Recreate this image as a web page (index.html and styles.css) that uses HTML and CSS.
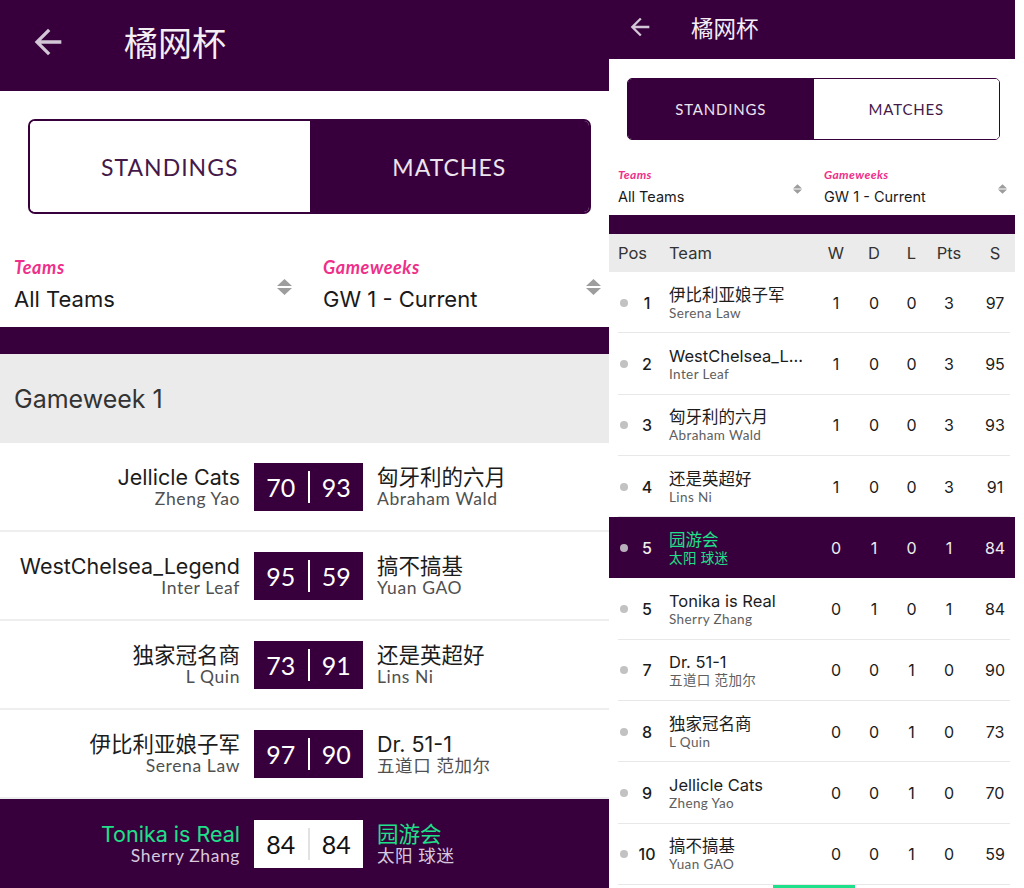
FILE: index.html
```html
<!DOCTYPE html>
<html lang="zh">
<head>
<meta charset="utf-8">
<title>橘网杯</title>
<link rel="stylesheet" href="styles.css">
</head>
<body>
<div class="screen">
  <!-- LEFT: matches -->
  <section class="phone phone-l">
    <header class="appbar appbar-l">
      <svg class="back back-l" viewBox="0 0 24 24"><path d="M20 11H7.83l5.59-5.59L12 4l-8 8 8 8 1.41-1.41L7.83 13H20v-2z"/></svg>
      <h1 class="title title-l">橘网杯</h1>
    </header>
    <div class="tabs-wrap tabs-wrap-l">
      <div class="tabs tabs-l">
        <div class="tab">STANDINGS</div>
        <div class="tab active">MATCHES</div>
      </div>
    </div>
    <div class="filters filters-l">
      <div class="filter">
        <div class="filter-text"><div class="flabel">Teams</div><div class="fvalue">All Teams</div></div>
        <svg class="updown" viewBox="0 0 15 16"><path d="M0 7L7.5 0L15 7Z M0 9L15 9L7.5 16Z"/></svg>
      </div>
      <div class="filter">
        <div class="filter-text"><div class="flabel">Gameweeks</div><div class="fvalue">GW 1 - Current</div></div>
        <svg class="updown" viewBox="0 0 15 16"><path d="M0 7L7.5 0L15 7Z M0 9L15 9L7.5 16Z"/></svg>
      </div>
    </div>
    <div class="band band-l"></div>
    <div class="gw-title">Gameweek 1</div>
    <div class="match">
      <div class="side home"><div class="team">Jellicle Cats</div><div class="mgr">Zheng Yao</div></div>
      <div class="score"><span>70</span><i class="sep"></i><span>93</span></div>
      <div class="side away"><div class="team">匈牙利的六月</div><div class="mgr">Abraham Wald</div></div>
    </div>
    <div class="match">
      <div class="side home"><div class="team">WestChelsea_Legend</div><div class="mgr">Inter Leaf</div></div>
      <div class="score"><span>95</span><i class="sep"></i><span>59</span></div>
      <div class="side away"><div class="team">搞不搞基</div><div class="mgr">Yuan GAO</div></div>
    </div>
    <div class="match">
      <div class="side home"><div class="team">独家冠名商</div><div class="mgr">L Quin</div></div>
      <div class="score"><span>73</span><i class="sep"></i><span>91</span></div>
      <div class="side away"><div class="team">还是英超好</div><div class="mgr">Lins Ni</div></div>
    </div>
    <div class="match">
      <div class="side home"><div class="team">伊比利亚娘子军</div><div class="mgr">Serena Law</div></div>
      <div class="score"><span>97</span><i class="sep"></i><span>90</span></div>
      <div class="side away"><div class="team">Dr. 51-1</div><div class="mgr">五道口 范加尔</div></div>
    </div>
    <div class="match me">
      <div class="side home"><div class="team">Tonika is Real</div><div class="mgr">Sherry Zhang</div></div>
      <div class="score"><span>84</span><i class="sep"></i><span>84</span></div>
      <div class="side away"><div class="team">园游会</div><div class="mgr">太阳 球迷</div></div>
    </div>
  </section>

  <!-- RIGHT: standings -->
  <section class="phone phone-r">
    <header class="appbar appbar-r">
      <svg class="back back-r" viewBox="0 0 24 24"><path d="M20 11H7.83l5.59-5.59L12 4l-8 8 8 8 1.41-1.41L7.83 13H20v-2z"/></svg>
      <h1 class="title title-r">橘网杯</h1>
    </header>
    <div class="tabs-wrap tabs-wrap-r">
      <div class="tabs tabs-r">
        <div class="tab active">STANDINGS</div>
        <div class="tab">MATCHES</div>
      </div>
    </div>
    <div class="filters filters-r">
      <div class="filter">
        <div class="filter-text"><div class="flabel">Teams</div><div class="fvalue">All Teams</div></div>
        <svg class="updown" viewBox="0 0 15 16"><path d="M0 7L7.5 0L15 7Z M0 9L15 9L7.5 16Z"/></svg>
      </div>
      <div class="filter">
        <div class="filter-text"><div class="flabel">Gameweeks</div><div class="fvalue">GW 1 - Current</div></div>
        <svg class="updown" viewBox="0 0 15 16"><path d="M0 7L7.5 0L15 7Z M0 9L15 9L7.5 16Z"/></svg>
      </div>
    </div>
    <div class="band band-r"></div>
    <div class="table">
      <div class="trow thead">
        <div class="c-pos">Pos</div><div class="c-team">Team</div>
        <div class="c-n">W</div><div class="c-n">D</div><div class="c-n">L</div><div class="c-n">Pts</div><div class="c-n c-s">S</div>
      </div>
      <div class="trow">
        <div class="c-pos"><i class="dot"></i><span class="pos">1</span></div>
        <div class="c-team"><div class="tname">伊比利亚娘子军</div><div class="tmgr">Serena Law</div></div>
        <div class="c-n">1</div><div class="c-n">0</div><div class="c-n">0</div><div class="c-n">3</div><div class="c-n c-s">97</div>
      </div>
      <div class="trow">
        <div class="c-pos"><i class="dot"></i><span class="pos">2</span></div>
        <div class="c-team"><div class="tname">WestChelsea_Legend</div><div class="tmgr">Inter Leaf</div></div>
        <div class="c-n">1</div><div class="c-n">0</div><div class="c-n">0</div><div class="c-n">3</div><div class="c-n c-s">95</div>
      </div>
      <div class="trow">
        <div class="c-pos"><i class="dot"></i><span class="pos">3</span></div>
        <div class="c-team"><div class="tname">匈牙利的六月</div><div class="tmgr">Abraham Wald</div></div>
        <div class="c-n">1</div><div class="c-n">0</div><div class="c-n">0</div><div class="c-n">3</div><div class="c-n c-s">93</div>
      </div>
      <div class="trow">
        <div class="c-pos"><i class="dot"></i><span class="pos">4</span></div>
        <div class="c-team"><div class="tname">还是英超好</div><div class="tmgr">Lins Ni</div></div>
        <div class="c-n">1</div><div class="c-n">0</div><div class="c-n">0</div><div class="c-n">3</div><div class="c-n c-s">91</div>
      </div>
      <div class="trow me">
        <div class="c-pos"><i class="dot"></i><span class="pos">5</span></div>
        <div class="c-team"><div class="tname">园游会</div><div class="tmgr">太阳 球迷</div></div>
        <div class="c-n">0</div><div class="c-n">1</div><div class="c-n">0</div><div class="c-n">1</div><div class="c-n c-s">84</div>
      </div>
      <div class="trow">
        <div class="c-pos"><i class="dot"></i><span class="pos">5</span></div>
        <div class="c-team"><div class="tname">Tonika is Real</div><div class="tmgr">Sherry Zhang</div></div>
        <div class="c-n">0</div><div class="c-n">1</div><div class="c-n">0</div><div class="c-n">1</div><div class="c-n c-s">84</div>
      </div>
      <div class="trow">
        <div class="c-pos"><i class="dot"></i><span class="pos">7</span></div>
        <div class="c-team"><div class="tname">Dr. 51-1</div><div class="tmgr">五道口 范加尔</div></div>
        <div class="c-n">0</div><div class="c-n">0</div><div class="c-n">1</div><div class="c-n">0</div><div class="c-n c-s">90</div>
      </div>
      <div class="trow">
        <div class="c-pos"><i class="dot"></i><span class="pos">8</span></div>
        <div class="c-team"><div class="tname">独家冠名商</div><div class="tmgr">L Quin</div></div>
        <div class="c-n">0</div><div class="c-n">0</div><div class="c-n">1</div><div class="c-n">0</div><div class="c-n c-s">73</div>
      </div>
      <div class="trow">
        <div class="c-pos"><i class="dot"></i><span class="pos">9</span></div>
        <div class="c-team"><div class="tname">Jellicle Cats</div><div class="tmgr">Zheng Yao</div></div>
        <div class="c-n">0</div><div class="c-n">0</div><div class="c-n">1</div><div class="c-n">0</div><div class="c-n c-s">70</div>
      </div>
      <div class="trow">
        <div class="c-pos"><i class="dot"></i><span class="pos">10</span></div>
        <div class="c-team"><div class="tname">搞不搞基</div><div class="tmgr">Yuan GAO</div></div>
        <div class="c-n">0</div><div class="c-n">0</div><div class="c-n">1</div><div class="c-n">0</div><div class="c-n c-s">59</div>
      </div>
    </div>
    <div class="scroll-tab"></div>
  </section>
</div>
</body>
</html>
```

FILE: styles.css
```css
:root {
  --purple: #37003c;
  --pink: #ef2f8a;
  --green: #1fe08a;
  --sans: "Inter", "Noto Sans CJK SC", sans-serif;
  --geo: "Lato", "Noto Sans CJK SC", sans-serif;
  --cjk: "Noto Sans CJK SC", sans-serif;
}

* { box-sizing: border-box; }

body {
  margin: 0;
  background: #fff;
  font-family: var(--sans);
  color: #1c1c1c;
}

.screen {
  display: flex;
  width: 1024px;
  height: 888px;
  overflow: hidden;
}

.phone {
  height: 888px;
  overflow: hidden;
  background: #fff;
  flex: none;
}
.phone-l { width: 609px; }
.phone-r { width: 406px; }

/* App bar */
.appbar {
  background: var(--purple);
  display: flex;
  align-items: center;
}
.appbar-l { height: 91px; padding: 0 0 8px 28px; }
.appbar-r { height: 59px; padding: 0 0 5px 17px; }

.back { fill: #d3c6d6; flex: none; }
.back-l { width: 40px; height: 40px; }
.back-r { width: 28px; height: 28px; }

.title {
  margin: 0;
  font-family: var(--cjk);
  font-weight: 400;
  color: #f4eef5;
  line-height: 1;
}
.title-l { font-size: 34px; margin-left: 56px; }
.title-r { font-size: 22.5px; margin-left: 37px; }

/* Segmented tabs */
.tabs-wrap-l { padding: 28px 18px 0 28px; }
.tabs-wrap-r { padding: 19px 15px 0 18px; }

.tabs {
  display: flex;
  border: 2px solid var(--purple);
  overflow: hidden;
}
.tabs-l { height: 95px; border-radius: 7px; }
.tabs-r { height: 62px; border-radius: 5px; border-width: 1.5px; }

.tab {
  flex: 1;
  display: flex;
  align-items: center;
  justify-content: center;
  font-family: var(--geo);
  color: #44194a;
  background: #fff;
}
.tab.active { background: var(--purple); color: #ece4ee; }
.tabs-l .tab { font-size: 23px; letter-spacing: 1px; }
.tabs-r .tab { font-size: 15px; letter-spacing: 0.8px; }

/* Filters */
.filters { display: grid; }
.filters-l { grid-template-columns: 309px 1fr; padding: 41px 0 8px; }
.filters-r { grid-template-columns: 204px 1fr; padding: 27px 0 4px; }

.filter {
  display: flex;
  align-items: center;
  justify-content: space-between;
}
.filters-l .filter:first-child { padding: 0 17px 0 14px; }
.filters-l .filter:last-child { padding: 0 8px 0 14px; }
.filters-r .filter:first-child { padding: 0 11px 0 9px; }
.filters-r .filter:last-child { padding: 0 8px 0 11px; }

.flabel {
  font-family: var(--geo);
  font-style: italic;
  font-weight: 700;
  color: var(--pink);
}
.fvalue { color: #1a1a1a; }

.filters-l .flabel { font-size: 18px; line-height: 24px; letter-spacing: 0.6px; }
.filters-l .fvalue { font-size: 22px; line-height: 40px; }
.filters-r .flabel { font-size: 12px; line-height: 16px; letter-spacing: 0.4px; }
.filters-r .fvalue { font-size: 14.5px; line-height: 28px; }

.updown { fill: #9d9d9d; flex: none; }
.filters-l .updown { width: 15px; height: 16px; }
.filters-r .updown { width: 9px; height: 12px; }

/* Purple band */
.band { background: var(--purple); }
.band-l { height: 27px; }
.band-r { height: 19px; }

/* Gameweek header */
.gw-title {
  height: 89px;
  background: #ebebeb;
  display: flex;
  align-items: center;
  padding: 0 0 0 14px;
  font-size: 25px;
  color: #333;
}

/* Match rows */
.match {
  display: grid;
  grid-template-columns: 254px 109px 1fr;
  align-items: center;
  height: 89px;
  border-bottom: 2px solid #eeeeee;
}
.match.me { background: var(--purple); border-bottom: none; }

.side { min-width: 0; white-space: nowrap; }
.home { text-align: right; padding-right: 14px; }
.away { padding-left: 14px; }

.team { font-size: 21.5px; line-height: 24px; color: #1c1c1c; }
.mgr {
  font-family: var(--geo);
  font-size: 17.5px;
  line-height: 20px;
  letter-spacing: 0.6px;
  color: #505050;
}
.match.me .team { color: var(--green); }
.match.me .mgr { color: #d8c9dc; }

.score {
  height: 48px;
  background: var(--purple);
  display: flex;
  align-items: stretch;
}
.score span {
  flex: 1;
  display: flex;
  align-items: center;
  justify-content: center;
  font-family: var(--geo);
  font-size: 25px;
  color: #fff;
}
.score .sep { width: 2px; margin: 8px 0; background: #fff; }
.match.me .score { background: #fff; }
.match.me .score span { color: #111; }
.match.me .score .sep { background: #e2e2e2; }

/* Standings table */
.trow {
  display: grid;
  grid-template-columns: 60px minmax(0, 1fr) 38px 38px 37px 38px 47px;
  align-items: center;
  height: 61.3px;
  position: relative;
  font-size: 16px;
  color: #1c1c1c;
}
.trow::after {
  content: "";
  position: absolute;
  left: 9px;
  right: 5px;
  bottom: 0;
  height: 1px;
  background: #e8e8e8;
}
.trow.thead {
  height: 38px;
  background: #ebebeb;
  font-size: 16.5px;
  color: #333;
}
.trow.thead::after, .trow.me::after { display: none; }
.trow.me { background: var(--purple); color: #eee; }

.thead .c-pos { padding-left: 9px; }
.c-pos { display: flex; align-items: center; padding-left: 11px; }
.dot {
  width: 8px;
  height: 8px;
  border-radius: 50%;
  background: #c2c2c2;
  margin-right: 8px;
  flex: none;
}
.trow.me .dot { background: #b9aebb; }
.pos { width: 22px; text-align: center; font-weight: 500; }

.c-team { min-width: 0; padding-right: 8px; }
.tname {
  font-size: 16.5px;
  line-height: 20px;
  white-space: nowrap;
  overflow: hidden;
  text-overflow: ellipsis;
}
.tmgr {
  font-family: var(--geo);
  font-size: 13.5px;
  line-height: 16px;
  letter-spacing: 0.4px;
  color: #5e5e5e;
  white-space: nowrap;
}
.trow.me .tname, .trow.me .tmgr { color: var(--green); }

.c-n { text-align: center; }
.c-s { padding-left: 7px; }

.scroll-tab {
  width: 82px;
  height: 3px;
  margin-left: 164px;
  background: var(--green);
}
```
